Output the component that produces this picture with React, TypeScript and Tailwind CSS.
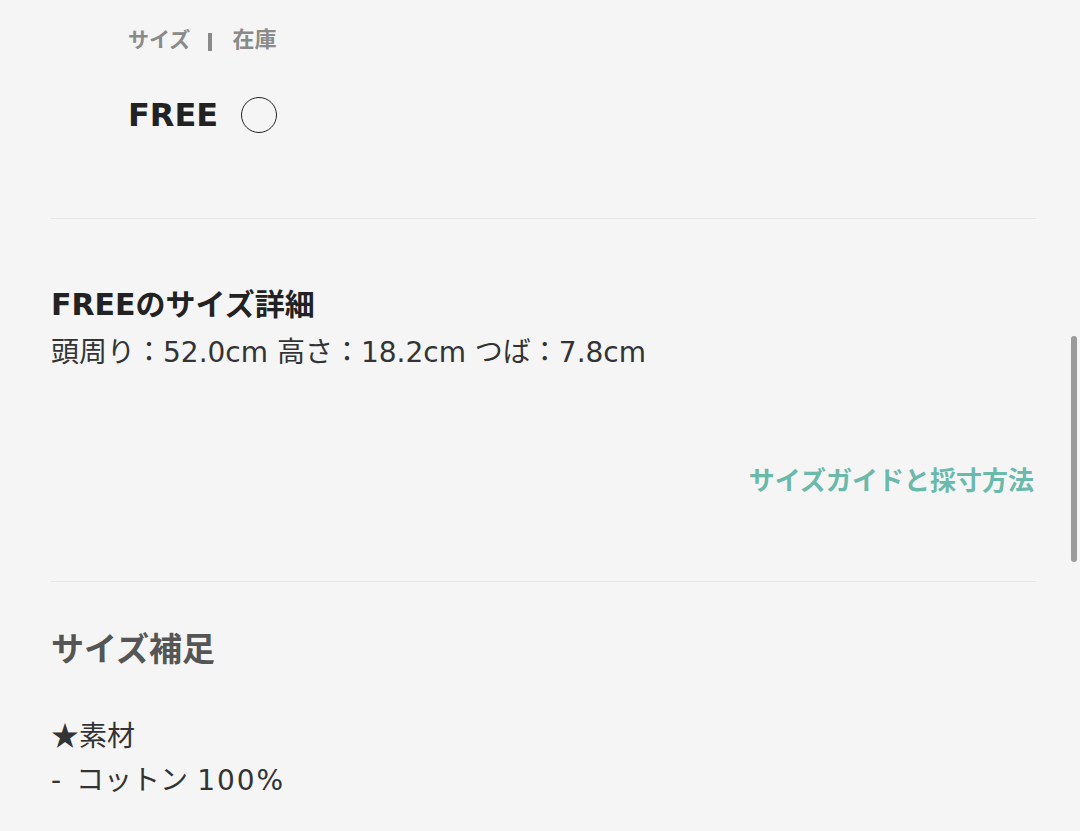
import React from "react";

const font = {
  fontFamily: '"DejaVu Sans", "Noto Sans CJK JP", sans-serif',
};

function StockHeader() {
  return (
    <div className="pl-[77px] pt-[26px] pb-[83px]">
      <div className="flex items-center text-[21px] font-bold text-[#8a8a8a] leading-[28px]">
        <span>サイズ</span>
        <span className="ml-[18px] mr-[20px] mt-[3px] w-[4px] h-[18px] bg-[#8a8a8a]" />
        <span className="text-[22px]">在庫</span>
      </div>
      <div className="flex items-center mt-[41px]">
        <p className="text-[32px] font-bold text-[#222] leading-[40px]">FREE</p>
        <div className="ml-[23px] w-[36px] h-[36px] rounded-full border-[1.5px] border-[#222]" />
      </div>
    </div>
  );
}

function SizeDetail() {
  return (
    <div className="pt-[66px] pb-[82px]">
      <h2 className="text-[30px] font-bold text-[#222] leading-[40px]">
        FREEのサイズ詳細
      </h2>
      <p className="text-[28px] text-[#333] leading-[40px] mt-[8px]">
        頭周り：52.0cm 高さ：18.2cm つば：7.8cm
      </p>
      <div className="flex justify-end mt-[90px] pr-[2px]">
        <a className="text-[26px] font-bold text-[#6bb9aa] leading-[36px]">
          サイズガイドと採寸方法
        </a>
      </div>
    </div>
  );
}

function SizeNote() {
  return (
    <div className="pt-[48px]">
      <h2 className="text-[33px] font-bold text-[#555] leading-[40px]">
        サイズ補足
      </h2>
      <div className="mt-[42px] text-[28px] text-[#333] leading-[44px]">
        <p>
          <span className="font-['Noto_Sans_CJK_JP',sans-serif]">★</span>素材
        </p>
        <p>
          -<span className="ml-[15px]">コットン</span>
          <span className="ml-[9px] tracking-[2px]">100%</span>
        </p>
      </div>
    </div>
  );
}

export default function App() {
  return (
    <div
      className="relative w-[1080px] h-[831px] overflow-hidden bg-[#f5f5f5]"
      style={font}
    >
      <div className="pl-[51px] pr-[44px]">
        <StockHeader />
        <div className="border-t border-[#e6e6e6]" />
        <SizeDetail />
        <div className="border-t border-[#e6e6e6]" />
        <SizeNote />
      </div>
      {/* overlay scrollbar */}
      <div className="absolute right-[3px] top-[336px] w-[6px] h-[226px] rounded-full bg-[#9b9b9b]" />
    </div>
  );
}
